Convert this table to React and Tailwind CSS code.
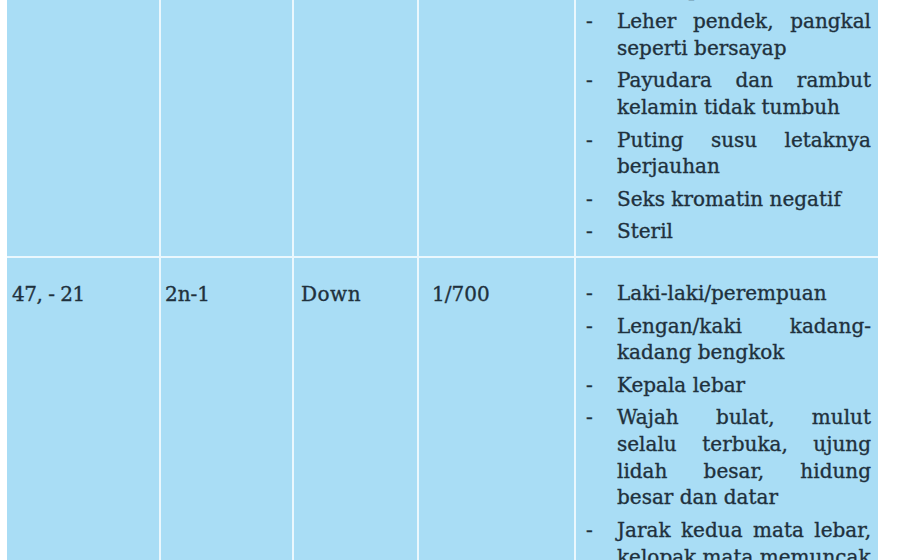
import React from "react";

const FONT = { fontFamily: '"DejaVu Serif", "Liberation Serif", serif' };

function Item({ lines }) {
  return (
    <div className="flex">
      <span className="w-[41px] shrink-0 pl-[10px]">-</span>
      <div className="w-[254px] shrink-0">
        {lines.map((l, i) =>
          i < lines.length - 1 ? (
            <div key={i} className="whitespace-nowrap text-justify [text-align-last:justify]">
              {l}
            </div>
          ) : (
            <div key={i} className="whitespace-nowrap">
              {l}
            </div>
          )
        )}
      </div>
    </div>
  );
}

const row1 = [
  ["Perempuan"],
  ["Tubuh pendek"],
  ["Leher pendek, pangkal", "seperti bersayap"],
  ["Payudara dan rambut", "kelamin tidak tumbuh"],
  ["Puting susu letaknya", "berjauhan"],
  ["Seks kromatin negatif"],
  ["Steril"],
];

const row2 = [
  ["Laki-laki/perempuan"],
  ["Lengan/kaki kadang-", "kadang bengkok"],
  ["Kepala lebar"],
  ["Wajah bulat, mulut", "selalu terbuka, ujung", "lidah besar, hidung", "besar dan datar"],
  ["Jarak kedua mata lebar,", "kelopak mata memuncak"],
  ["Jari pendek dan gemuk"],
];

export default function App() {
  return (
    <div
      className="w-[900px] h-[560px] overflow-hidden bg-white pl-[7px] pr-[22px] text-[20px] leading-[26.7px] text-[#1f313d] [-webkit-text-stroke:0.35px_#1f313d]"
      style={FONT}
    >
      <div className="flex flex-col gap-[2px] bg-[#eaf7fd]">
        <div className="grid grid-cols-[152px_131px_123px_155px_1fr] gap-x-[2px] h-[256px]">
          <div className="bg-[#a9ddf5]" />
          <div className="bg-[#a9ddf5]" />
          <div className="bg-[#a9ddf5]" />
          <div className="bg-[#a9ddf5]" />
          <div className="bg-[#a9ddf5] overflow-hidden flex flex-col justify-end gap-[5.8px] pb-[11px]">
            {row1.map((it, i) => (
              <Item key={i} lines={it} />
            ))}
          </div>
        </div>
        <div className="grid grid-cols-[152px_131px_123px_155px_1fr] gap-x-[2px] h-[400px]">
          <div className="bg-[#a9ddf5] pt-[23px] pl-[5px] tracking-[-0.5px]">47, - 21</div>
          <div className="bg-[#a9ddf5] pt-[23px] pl-[4px]">2n-1</div>
          <div className="bg-[#a9ddf5] pt-[23px] pl-[7px] tracking-[0.5px]">Down</div>
          <div className="bg-[#a9ddf5] pt-[23px] pl-[13px]">1/700</div>
          <div className="bg-[#a9ddf5] pt-[22px] flex flex-col gap-[5.8px]">
            {row2.map((it, i) => (
              <Item key={i} lines={it} />
            ))}
          </div>
        </div>
      </div>
    </div>
  );
}
